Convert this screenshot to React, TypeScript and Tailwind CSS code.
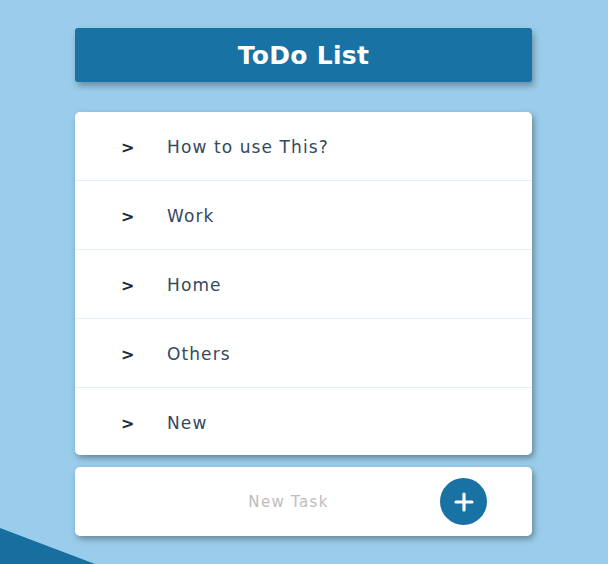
import React from "react";

const items = ["How to use This?", "Work", "Home", "Others", "New"];

export default function App() {
  return (
    <div
      className="relative w-[608px] h-[564px] overflow-hidden bg-[#9acdeb]"
      style={{ fontFamily: '"DejaVu Sans", Verdana, sans-serif' }}
    >
      <svg className="absolute left-0 top-0" width="608" height="564">
        <polygon points="0,528 95,564 0,564" fill="#176fa0" />
      </svg>
      <div className="relative ml-[75px] w-[457px] pt-[28px] flex flex-col">
        <div className="h-[54px] rounded-[3px] bg-[#1872a3] flex items-center justify-center shadow-[2px_4px_6px_rgba(0,0,0,0.3)]">
          <span className="text-white text-[25px] font-bold tracking-[0.3px] pt-[2px]">ToDo List</span>
        </div>
        <div className="mt-[30px] rounded-[5px] bg-white shadow-[2px_3px_6px_rgba(0,0,0,0.35)] flex flex-col">
          {items.map((t, i) => (
            <div
              key={t}
              className={`flex items-center pt-[4px] ${i < items.length - 1 ? "h-[69px] border-b border-[#e3f1f8]" : "h-[67px]"}`}
            >
              <span className="w-[92px] pl-[46px] text-[#1b2a3a] text-[16px] font-bold">&gt;</span>
              <span className="text-[#34495e] text-[17px] tracking-[1.1px]">{t}</span>
            </div>
          ))}
        </div>
        <div className="mt-[12px] h-[69px] rounded-[5px] bg-white shadow-[2px_3px_6px_rgba(0,0,0,0.35)] flex items-center">
          <div className="flex-1 flex justify-center pl-[82px]">
            <span className="text-[#bdbdbd] text-[15px] tracking-[1.3px] pt-[1px]">New Task</span>
          </div>
          <div className="mr-[45px] ml-[20px] w-[47px] h-[47px] rounded-full bg-[#1872a3] flex items-center justify-center">
            <svg width="20" height="20" viewBox="0 0 20 20">
              <path d="M10 2 V18 M2 10 H18" stroke="white" strokeWidth="3.2" strokeLinecap="round" />
            </svg>
          </div>
        </div>
      </div>
    </div>
  );
}
